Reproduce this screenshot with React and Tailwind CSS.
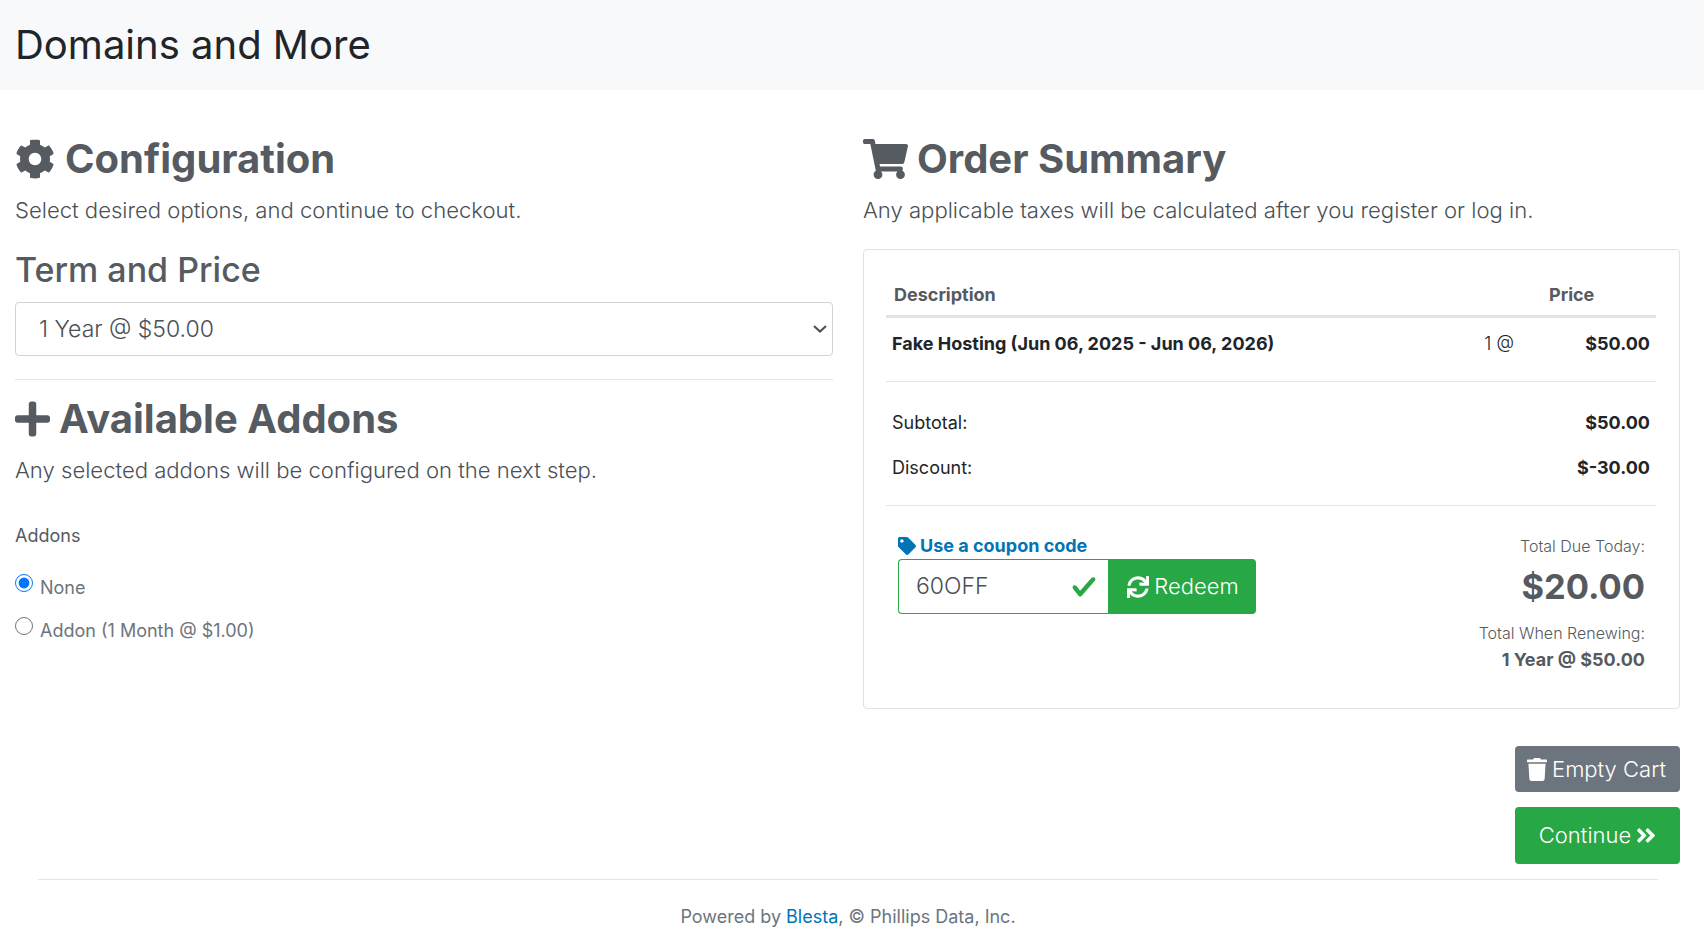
import React from 'react';
import { FaCog, FaShoppingCart, FaPlus, FaTag, FaSync, FaTrash, FaAngleDoubleRight } from 'react-icons/fa';

const font = { fontFamily: 'Inter, sans-serif' };

function Heading({ icon, children, gap = 'gap-[9px]' }) {
  return (
    <h2 className={`flex items-center ${gap} h-[48px] text-[40px] font-bold leading-[48px] text-[#555b61]`}>
      {icon}
      <span>{children}</span>
    </h2>
  );
}

function Lead({ children }) {
  return <p className="mt-[11px] text-[22.08px] font-light leading-[33px] text-[#495057]">{children}</p>;
}

function SumRow({ label, value }) {
  return (
    <div className="flex items-center justify-between h-[45px] px-[6px] text-[#212529]">
      <span className="text-[18px] font-normal">{label}</span>
      <span className="text-[18px] font-bold">{value}</span>
    </div>
  );
}

export default function App() {
  return (
    <div className="min-h-[940px] bg-white" style={font}>
      <header className="h-[90px] bg-[#f8f9fa] px-[15px] flex items-center">
        <h1 className="text-[40px] leading-[48px] text-[#212529]">Domains and More</h1>
      </header>

      <main className="flex gap-[30px] pl-[15px] pr-[24px] pt-[45px]">
        <section className="w-[818px]">
          <Heading gap="gap-[10px]" icon={<FaCog className="w-[40px] h-[40px]" />}>Configuration</Heading>
          <Lead>Select desired options, and continue to checkout.</Lead>
          <h3 className="mt-[22px] text-[34px] leading-[41px] font-medium text-[#555b61]">Term and Price</h3>
          <div className="relative mt-[12px]">
            <select className="block appearance-none w-full h-[54px] pl-[23px] pr-[30px] text-[23px] font-light text-[#495057] border border-[#ced4da] rounded-[4px] bg-white">
              <option>1 Year @ $50.00</option>
            </select>
            <svg viewBox="0 0 14 8" className="absolute right-[6px] top-[23px] w-[14px] h-[8px] pointer-events-none" fill="none" stroke="#4a4f55" strokeWidth="2">
              <path d="M1 1 7 6.6 13 1" />
            </svg>
          </div>
          <hr className="mt-[23px] border-[#e3e5e7]" />
          <div className="mt-[15px]">
            <Heading icon={<FaPlus className="w-[35px] h-[40px]" />}>Available Addons</Heading>
          </div>
          <Lead>Any selected addons will be configured on the next step.</Lead>
          <p className="mt-[37px] text-[18px] leading-[24px] text-[#565a5f]">Addons</p>
          <label className="mt-[23px] flex items-start gap-[7px] text-[18px] leading-[28px] font-normal text-[#6c757d]">
            <input type="radio" name="addon" defaultChecked className="m-0 mt-[3px] w-[18px] h-[18px]" />
            <span className="mt-[3px]">None</span>
          </label>
          <label className="mt-[12px] flex items-start gap-[7px] text-[18px] leading-[28px] font-normal text-[#6c757d]">
            <input type="radio" name="addon" className="m-0 mt-[3px] w-[18px] h-[18px]" />
            <span className="mt-[3px]">Addon (1 Month @ $1.00)</span>
          </label>
        </section>

        <section className="w-[817px]">
          <Heading icon={<FaShoppingCart className="w-[45px] h-[40px]" />}>Order Summary</Heading>
          <Lead>Any applicable taxes will be calculated after you register or log in.</Lead>

          <div className="mt-[22px] h-[460px] border border-[#dfe1e3] rounded-[4px] pl-[22px] pr-[23px] pt-[23px]">
            <div className="flex items-center h-[45px] px-[8px] border-b-[3px] border-[#e1e3e5] text-[18px] font-bold text-[#565a5f]">
              <span className="flex-1">Description</span>
              <span className="w-[99px]">Price</span>
            </div>
            <div className="flex items-start h-[64px] px-[6px] pt-[12px] leading-[28px] border-b border-[#e3e5e7] text-[#212529]">
              <span className="flex-1 text-[18px] font-bold">Fake Hosting (Jun 06, 2025 - Jun 06, 2026)</span>
              <span className="text-[18px] font-light">1 @</span>
              <span className="w-[136px] text-right text-[18px] font-bold">$50.00</span>
            </div>
            <div className="pt-[18px] pb-[15px] border-b border-[#e3e5e7]">
              <SumRow label="Subtotal:" value="$50.00" />
              <SumRow label="Discount:" value="$-30.00" />
            </div>

            <div className="flex justify-between pt-[26px] pl-[12px] pr-[11px]">
              <div>
                <a className="flex items-center gap-[4px] h-[27px] text-[18px] font-bold text-[#0174b5]">
                  <FaTag className="w-[18px] h-[18px]" />
                  <span>Use a coupon code</span>
                </a>
                <div className="flex w-[358px] h-[55px]">
                  <div className="flex items-center justify-between w-[210px] pl-[17px] pr-[11px] border border-[#28a745] border-r-0 rounded-l-[4px] text-[23px] font-light text-[#495057]">
                    <span>60OFF</span>
                    <svg viewBox="0 0 8 8" className="w-[26px] h-[26px]" fill="#28a745">
                      <path d="M2.3 6.73L.6 4.53c-.4-1.04.46-1.4 1.1-.8l1.1 1.4 3.4-3.8c.6-.63 1.6-.27 1.2.7l-4 4.6c-.43.5-.8.4-1.1.1z" />
                    </svg>
                  </div>
                  <button className="flex items-center justify-center gap-[5px] flex-1 pl-[2px] bg-[#28a745] rounded-r-[4px] text-[22px] font-light text-white">
                    <FaSync className="w-[22px] h-[22px]" />
                    <span>Redeem</span>
                  </button>
                </div>
              </div>
              <div className="pt-[2px] text-right text-[#565a5f]">
                <p className="text-[16px] font-light leading-[24px]">Total Due Today:</p>
                <p className="mt-[7px] text-[34.5px] font-bold leading-[44px]">$20.00</p>
                <p className="mt-[12px] text-[16px] font-light leading-[24px]">Total When Renewing:</p>
                <p className="mt-[3px] text-[18px] font-bold leading-[24px]">1 Year @ $50.00</p>
              </div>
            </div>
          </div>

          <div className="flex flex-col items-end mt-[37px] gap-[15px]">
            <button className="flex items-center justify-center gap-[5px] w-[165px] h-[46px] pr-[2px] rounded-[4px] bg-[#6c757d] text-[22px] font-light text-white">
              <FaTrash className="w-[20px] h-[23px]" />
              <span>Empty Cart</span>
            </button>
            <button className="flex items-center justify-center gap-[5px] w-[165px] h-[57px] rounded-[4px] bg-[#28a745] text-[22px] font-light text-white">
              <span>Continue</span>
              <FaAngleDoubleRight className="w-[20px] h-[23px]" />
            </button>
          </div>
        </section>
      </main>

      <footer className="mx-[38px] w-[1620px] mt-[15px] border-t border-[#e3e5e7] pt-[25px] text-center text-[18px] font-normal leading-[24px] text-[#6c757d]">
        Powered by <a className="text-[#0174b5]">Blesta</a>, © Phillips Data, Inc.
      </footer>
    </div>
  );
}
